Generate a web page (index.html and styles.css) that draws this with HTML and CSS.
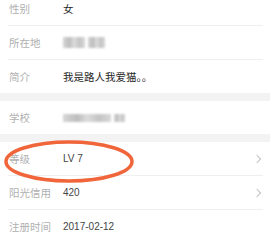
FILE: index.html
```html
<!DOCTYPE html>
<html lang="zh-CN">
<head>
<meta charset="utf-8">
<link rel="stylesheet" href="styles.css">
</head>
<body>
<div class="page">
  <div class="group first">
    <div class="row"><span class="label">性别</span><span class="value">女</span></div>
    <div class="row"><span class="label">所在地</span><span class="value"><span class="mosaic w22"></span><span class="mosaic w17"></span></span></div>
    <div class="row"><span class="label">简介</span><span class="value">我是路人我爱猫。。</span></div>
  </div>
  <div class="gap"></div>
  <div class="group">
    <div class="row"><span class="label">学校</span><span class="value"><span class="mosaic w48"></span><span class="mosaic w12"></span></span></div>
  </div>
  <div class="gap"></div>
  <div class="group">
    <div class="row"><span class="label">等级</span><span class="value latin">LV 7</span><span class="chev"></span></div>
    <div class="row"><span class="label">阳光信用</span><span class="value latin">420</span><span class="chev"></span></div>
    <div class="row"><span class="label">注册时间</span><span class="value latin">2017-02-12</span></div>
  </div>
  <svg class="oval" width="140" height="46" viewBox="0 0 140 46">
    <ellipse cx="69" cy="22.5" rx="63" ry="19.5" fill="none" stroke="#f0653a" stroke-width="3.5"/>
  </svg>
</div>
</body>
</html>
```
FILE: styles.css
```css
html, body {
  margin: 0;
  padding: 0;
  background: #fff;
}
.page {
  position: relative;
  width: 270px;
  height: 242px;
  overflow: hidden;
  font-family: "Noto Sans CJK SC", "Liberation Sans", sans-serif;
  font-size: 10.5px;
}
.group {
  background: #fff;
}
.group.first {
  margin-top: -8px;
}
.gap {
  height: 8px;
  background: #f3f3f3;
}
.row {
  position: relative;
  display: flex;
  align-items: center;
  height: 33px;
  padding: 0 8px 0 9px;
}
.row + .row {
  border-top: 1px solid #efefef;
  margin-left: 8px;
  margin-right: 7px;
  padding-left: 1px;
  padding-right: 1px;
}
.label {
  width: 54px;
  color: #b0b0b0;
  flex: none;
}
.value {
  flex: 1;
  color: #262626;
  display: flex;
  align-items: center;
  gap: 3px;
}
.latin {
  font-family: "Liberation Sans", sans-serif;
  font-size: 10px;
  color: #444;
}
.mosaic {
  display: inline-block;
  height: 11px;
  background: linear-gradient(90deg, #d6d6d6 0%, #bdbdbd 30%, #dcdcdc 50%, #c4c4c4 75%, #d8d8d8 100%);
  filter: blur(1.3px);
}
.w22 { width: 22px; }
.w17 { width: 17px; }
.w48 { width: 48px; height: 8px; }
.w12 { width: 11px; height: 8px; }
.chev {
  width: 5px;
  height: 5px;
  border-top: 1px solid #c4c4c4;
  border-right: 1px solid #c4c4c4;
  transform: rotate(45deg);
  margin-right: 2px;
}
.oval {
  position: absolute;
  left: 0;
  top: 139px;
}
```
